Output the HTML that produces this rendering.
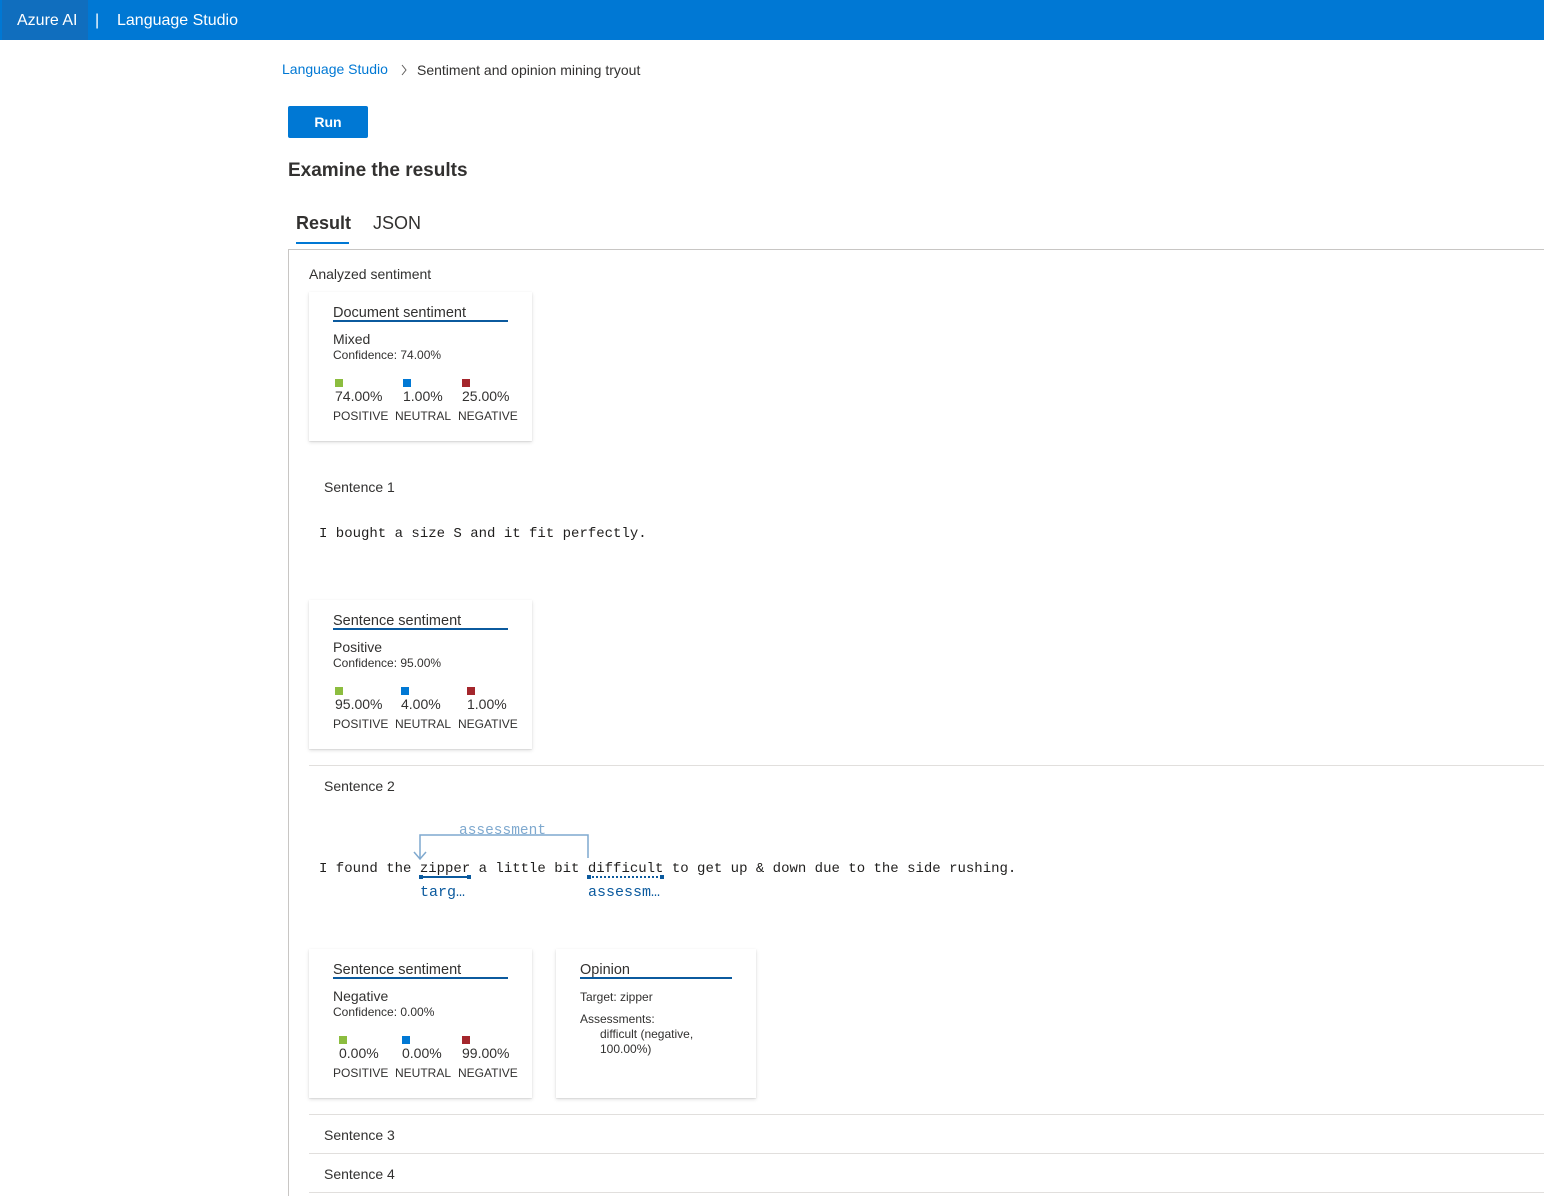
<!DOCTYPE html>
<html><head><meta charset="utf-8"><style>
*{margin:0;padding:0;box-sizing:border-box}
body{width:1544px;height:1196px;position:relative;overflow:hidden;background:#fff;font-family:"Liberation Sans",sans-serif;color:#323130}
.a{position:absolute;white-space:nowrap}
.top{position:absolute;left:0;top:0;width:1544px;height:40px;background:#0078d4}
.card{position:absolute;background:#fff;box-shadow:0 1.6px 3.6px rgba(0,0,0,.13),0 0.3px 0.9px rgba(0,0,0,.11)}
.t14{font-size:14px;line-height:16px}
.tt{font-size:14.5px;line-height:16px}
.t12{font-size:12px;line-height:14px}
.sw{position:absolute;width:8px;height:8px}
.mono{font-family:"Liberation Mono",monospace;font-size:14px;line-height:16px;color:#201f1e}
.hr{position:absolute;left:309px;width:1235px;height:1px;background:#e1dfdd}
</style></head><body>
<div class="top"></div>
<div class="a" style="left:2px;top:0;width:86px;height:40px;background:#106ebe"></div>
<div class="a" style="left:17px;top:12px;color:#fff;font-size:16px;line-height:18px">Azure AI</div>
<div class="a" style="left:95px;top:12px;color:#fff;font-size:16px;line-height:18px">|</div>
<div class="a" style="left:117px;top:12px;color:#fff;font-size:16px;line-height:18px">Language Studio</div>

<div class="a t14" style="left:282px;top:61px;color:#0078d4">Language Studio</div>
<svg class="a" style="left:400px;top:64px" width="8" height="12"><path d="M2 1 L6 6 L2 11" fill="none" stroke="#605e5c" stroke-width="1"/></svg>
<div class="a t14" style="left:417px;top:62px">Sentiment and opinion mining tryout</div>
<div class="a" style="left:288px;top:106px;width:80px;height:32px;background:#0078d4;border-radius:2px;color:#fff;font-size:14px;font-weight:bold;text-align:center;line-height:32px">Run</div>
<div class="a" style="left:288px;top:160px;font-size:19px;line-height:22px;font-weight:bold">Examine the results</div>
<div class="a" style="left:296px;top:213px;font-size:18px;line-height:20px;font-weight:bold">Result</div>
<div class="a" style="left:296px;top:242px;width:53px;height:2px;background:#0078d4"></div>
<div class="a" style="left:373px;top:213px;font-size:18px;line-height:20px">JSON</div>
<div class="a" style="left:288px;top:249px;width:1256px;height:1px;background:#c8c6c4"></div>
<div class="a" style="left:288px;top:249px;width:1px;height:947px;background:#c8c6c4"></div>

<div class="a t14" style="left:309px;top:266px">Analyzed sentiment</div>

<!-- card 1 -->
<div class="card" style="left:309px;top:292px;width:223px;height:149px"></div>
<div class="a tt" style="left:333px;top:305px">Document sentiment</div>
<div class="a" style="left:333px;top:320px;width:175px;height:2px;background:#0b5a9e"></div>
<div class="a t14" style="left:333px;top:331px">Mixed</div>
<div class="a t12" style="left:333px;top:348px">Confidence: 74.00%</div>
<div class="sw" style="left:335px;top:379px;background:#8cbd3f"></div>
<div class="sw" style="left:403px;top:379px;background:#0078d4"></div>
<div class="sw" style="left:462px;top:379px;background:#a4262c"></div>
<div class="a t14" style="left:335px;top:388px">74.00%</div>
<div class="a t14" style="left:403px;top:388px">1.00%</div>
<div class="a t14" style="left:462px;top:388px">25.00%</div>
<div class="a t12" style="left:333px;top:409px">POSITIVE</div>
<div class="a t12" style="left:395px;top:409px">NEUTRAL</div>
<div class="a t12" style="left:458px;top:409px">NEGATIVE</div>

<div class="a t14" style="left:324px;top:479px">Sentence 1</div>
<div class="a mono" style="left:319px;top:526px">I bought a size S and it fit perfectly.</div>

<!-- card 2 -->
<div class="card" style="left:309px;top:600px;width:223px;height:149px"></div>
<div class="a tt" style="left:333px;top:613px">Sentence sentiment</div>
<div class="a" style="left:333px;top:628px;width:175px;height:2px;background:#0b5a9e"></div>
<div class="a t14" style="left:333px;top:639px">Positive</div>
<div class="a t12" style="left:333px;top:656px">Confidence: 95.00%</div>
<div class="sw" style="left:335px;top:687px;background:#8cbd3f"></div>
<div class="sw" style="left:401px;top:687px;background:#0078d4"></div>
<div class="sw" style="left:467px;top:687px;background:#a4262c"></div>
<div class="a t14" style="left:335px;top:696px">95.00%</div>
<div class="a t14" style="left:401px;top:696px">4.00%</div>
<div class="a t14" style="left:467px;top:696px">1.00%</div>
<div class="a t12" style="left:333px;top:717px">POSITIVE</div>
<div class="a t12" style="left:395px;top:717px">NEUTRAL</div>
<div class="a t12" style="left:458px;top:717px">NEGATIVE</div>

<div class="hr" style="top:765px"></div>
<div class="a t14" style="left:324px;top:778px">Sentence 2</div>

<svg class="a" style="left:400px;top:815px" width="300" height="90">
<path d="M20 43 V20 H188 V43" fill="none" stroke="#7fa9cf" stroke-width="1.5"/>
<path d="M14 37 L20 44 L26 37" fill="none" stroke="#7fa9cf" stroke-width="1.5"/>
<text x="59" y="19" font-family="Liberation Mono, monospace" font-size="14.5" fill="#7fa9cf">assessment</text>
<line x1="20" y1="62" x2="70" y2="62" stroke="#0b5a9e" stroke-width="2"/>
<rect x="19" y="60" width="4" height="4" fill="#0b5a9e"/><rect x="67" y="60" width="4" height="4" fill="#0b5a9e"/>
<line x1="188" y1="62" x2="263" y2="62" stroke="#0b5a9e" stroke-width="2" stroke-dasharray="2,2"/>
<rect x="187" y="60" width="4" height="4" fill="#0b5a9e"/><rect x="260" y="60" width="4" height="4" fill="#0b5a9e"/>
<text x="20" y="81" font-family="Liberation Mono, monospace" font-size="15" fill="#0b5a9e">targ…</text>
<text x="188" y="81" font-family="Liberation Mono, monospace" font-size="15" fill="#0b5a9e">assessm…</text>
</svg>
<div class="a mono" style="left:319px;top:861px">I found the zipper a little bit difficult to get up &amp; down due to the side rushing.</div>

<!-- card 3 -->
<div class="card" style="left:309px;top:949px;width:223px;height:149px"></div>
<div class="a tt" style="left:333px;top:962px">Sentence sentiment</div>
<div class="a" style="left:333px;top:977px;width:175px;height:2px;background:#0b5a9e"></div>
<div class="a t14" style="left:333px;top:988px">Negative</div>
<div class="a t12" style="left:333px;top:1005px">Confidence: 0.00%</div>
<div class="sw" style="left:339px;top:1036px;background:#8cbd3f"></div>
<div class="sw" style="left:402px;top:1036px;background:#0078d4"></div>
<div class="sw" style="left:462px;top:1036px;background:#a4262c"></div>
<div class="a t14" style="left:339px;top:1045px">0.00%</div>
<div class="a t14" style="left:402px;top:1045px">0.00%</div>
<div class="a t14" style="left:462px;top:1045px">99.00%</div>
<div class="a t12" style="left:333px;top:1066px">POSITIVE</div>
<div class="a t12" style="left:395px;top:1066px">NEUTRAL</div>
<div class="a t12" style="left:458px;top:1066px">NEGATIVE</div>

<!-- opinion -->
<div class="card" style="left:556px;top:949px;width:200px;height:149px"></div>
<div class="a tt" style="left:580px;top:962px">Opinion</div>
<div class="a" style="left:580px;top:977px;width:152px;height:2px;background:#0b5a9e"></div>
<div class="a t12" style="left:580px;top:990px">Target: zipper</div>
<div class="a t12" style="left:580px;top:1012px">Assessments:</div>
<div class="a t12" style="left:600px;top:1027px">difficult (negative,</div>
<div class="a t12" style="left:600px;top:1042px">100.00%)</div>

<div class="hr" style="top:1114px"></div>
<div class="a t14" style="left:324px;top:1127px">Sentence 3</div>
<div class="hr" style="top:1153px"></div>
<div class="a t14" style="left:324px;top:1166px">Sentence 4</div>
<div class="hr" style="top:1192px"></div>
</body></html>
